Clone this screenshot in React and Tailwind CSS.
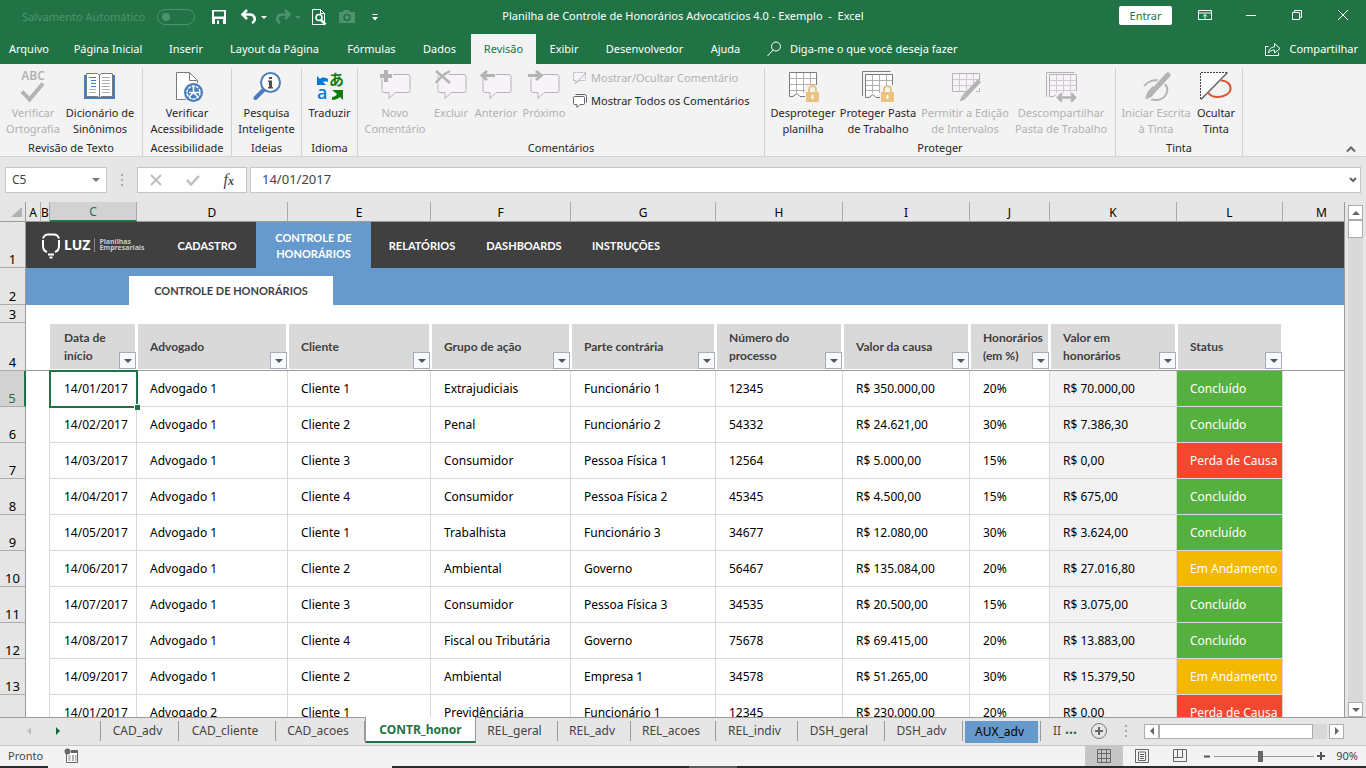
import clsx from "clsx";

const GRAY = "#b3b3b3";

/* ---------- icons ---------- */

function Icon({ children, size = 32, className, ...rest }) {
  return (
    <svg
      width={size}
      height={size}
      viewBox={`0 0 ${size} ${size}`}
      fill="none"
      aria-hidden="true"
      className={clsx("shrink-0 overflow-visible", className)}
      {...rest}
    >
      {children}
    </svg>
  );
}

function SpellingIcon() {
  return (
    <Icon>
      <text x="16" y="10" textAnchor="middle" fontSize="12" fontWeight="600" fill={GRAY}>
        ABC
      </text>
      <path d="M5 21.5l7.5 8L26 13.5" stroke={GRAY} strokeWidth="4" />
    </Icon>
  );
}

function ThesaurusIcon() {
  return (
    <Icon>
      <path d="M0 5h31v24H0z" fill="#4a7ebb" />
      <path d="M2.5 3.5h11l2 1.5 2-1.5h11v23h-11l-2 1.5-2-1.5h-11z" fill="#fff" stroke="#7a7a7a" />
      <path d="M15.5 5v23" stroke="#7a7a7a" />
      <path d="M5 7.5h7" stroke="#d9552f" />
      <path d="M7 10.5h5M7 13.5h5M7 16.5h5" stroke="#4a7ebb" />
      <path d="M5 19.5h7M5 22.5h7M18 7.5h8M18 10.5h8M18 13.5h8M18 16.5h8M18 19.5h8M18 22.5h8" stroke="#b0b0b0" />
    </Icon>
  );
}

function AccessibilityIcon() {
  return (
    <Icon>
      <path d="M5.5 2.5h13l8 8v19h-21z" fill="#fff" stroke="#7a7a7a" />
      <path d="M18.5 2.5v8h8" stroke="#7a7a7a" />
      <circle cx="22.5" cy="22.5" r="10.5" fill="#f3f3f3" />
      <circle cx="22.5" cy="22.5" r="9.5" fill="#4a7ebb" />
      <circle cx="22.5" cy="22.5" r="6.5" stroke="#fff" strokeWidth="1.5" strokeDasharray="3 1" />
      <path d="M22.5 16v6.5H29M22.5 22.5L18 27M22.5 22.5L27 27M22.5 22.5H18" stroke="#fff" strokeWidth="1.5" />
    </Icon>
  );
}

function LookupIcon() {
  return (
    <Icon>
      <path d="M13 19.5L4.500 28" stroke="#4a7ebb" strokeWidth="4" strokeLinecap="round" />
      <circle cx="19.5" cy="12.5" r="9.5" fill="#fff" stroke="#4a7ebb" strokeWidth="2" />
      <path d="M18 7h3v2h-3zM17 10.5h4V17h1v1.500h-5V17h1v-5h-1z" fill="#505050" />
    </Icon>
  );
}

function TranslateIcon() {
  return (
    <Icon>
      <path d="M3 6l3 3c2-2 5-2 8 0v3c-2-1-3-1-5 0l3 3H3z" fill="#0078d7" />
      <text x="15" y="15" fontSize="15" fontWeight="700" fill="#107c10" className="font-['Noto_Sans_CJK_JP',sans-serif]">
        あ
      </text>
      <text x="3" y="29" fontSize="18" fontWeight="500" fill="#0078d7">
        a
      </text>
      <path d="M18 20h11v10l-3-3c-2 2-5 3-8 3v-3c2 0 4-1 5-3z" fill="#107c10" />
    </Icon>
  );
}

function Balloon({ children }) {
  return (
    <Icon>
      <path
        d="M5 4.5h24a2 2 0 0 1 2 2v14a2 2 0 0 1-2 2H16l-6 6v-6H5a2 2 0 0 1-2-2v-14a2 2 0 0 1 2-2z"
        fill="#f7f3f9"
        stroke={GRAY}
      />
      {children}
    </Icon>
  );
}

function NewCommentIcon() {
  return (
    <Balloon>
      <path d="M7 0v13M0 6h14" stroke="#f3f3f3" strokeWidth="6" />
      <path d="M7 0v12M1 6h12" stroke={GRAY} strokeWidth="4" />
    </Balloon>
  );
}

function DeleteCommentIcon() {
  return (
    <Balloon>
      <path d="M1 0l14 13M15 0L1 13" stroke="#f3f3f3" strokeWidth="5" />
      <path d="M1 1l14 12M15 1C9 4 5 7 1 13" stroke={GRAY} strokeWidth="2.5" />
    </Balloon>
  );
}

function PreviousCommentIcon() {
  return (
    <Balloon>
      <path d="M0 5.5h16" stroke="#f3f3f3" strokeWidth="6" />
      <path d="M2 5.5h13M7 1L2 5.5 7 10" stroke={GRAY} strokeWidth="3" />
    </Balloon>
  );
}

function NextCommentIcon() {
  return (
    <Balloon>
      <path d="M0 5.5h14" stroke="#f3f3f3" strokeWidth="6" />
      <path d="M0 5.5h12M8 1l5 4.5L8 10" stroke={GRAY} strokeWidth="3" />
    </Balloon>
  );
}

function ToggleCommentIcon() {
  return (
    <Icon size={16}>
      <path d="M1.5 10.5v-8h12v8H7l-3 3v-3z" fill="#f7f3f9" stroke={GRAY} strokeDasharray="2 1" />
      <path d="M3 13.5L14 3" stroke={GRAY} />
    </Icon>
  );
}

function AllCommentsIcon() {
  return (
    <Icon size={16}>
      <path d="M3.5 1.500h9a2 2 0 0 1 2 2v6" stroke="#666" />
      <path d="M2.500 3.500h9a1 1 0 0 1 1 1v6a1 1 0 0 1-1 1H8l-3 3v-3H2.500a1 1 0 0 1-1-1v-6a1 1 0 0 1 1-1z" fill="#fff" stroke="#666" />
    </Icon>
  );
}

function Lock() {
  return (
    <g>
      <path d="M18 15h14v17H18z" fill="#f3f3f3" />
      <path d="M22 23v-3.5a3.500 3.500 0 0 1 7 0V23" stroke="#eac282" strokeWidth="2" />
      <path d="M19 22h13v10H19z" fill="#eac282" />
      <path d="M24.5 25h2v4h-2z" fill="#fff" />
    </g>
  );
}

function ProtectSheetIcon() {
  return (
    <Icon>
      <path d="M2.5 2.500h27v22l-3 2H11l-3-2-2 2-3.500-1z" fill="#fff" />
      <path d="M9.500 3v20M16.500 3v20M23.500 3v20M3 8.500h26M3 14.500h26M3 20.500h26" stroke="#b0b0b0" />
      <path d="M18 26.500h-5l-3-3-4 3H2.500v-24h27v14" stroke="#7a7a7a" />
      <Lock />
    </Icon>
  );
}

function ProtectWorkbookIcon() {
  return (
    <Icon>
      <path d="M.500 26V1.500h28" stroke="#7a7a7a" />
      <path d="M3.500 4.500h27v21h-27z" fill="#fff" />
      <path d="M10.500 5v18M17.500 5v18M24.500 5v18M4 10.500h26M4 15.500h26M4 20.500h26" stroke="#b0b0b0" />
      <path d="M18 27.500h-4l-3-3-4 3H3.500v-23h27v13" stroke="#7a7a7a" />
      <Lock />
    </Icon>
  );
}

function AllowEditIcon() {
  return (
    <Icon>
      <path d="M3.500 3.500h27v18h-27z" fill="#f7f3f9" stroke={GRAY} />
      <path d="M10.500 4v17M17.500 4v17M24.500 4v17M4 9.500h26M4 15.500h26" stroke="#cfc9d1" />
      <path d="M32 12L12 31" stroke="#f3f3f3" strokeWidth="7" />
      <path d="M30.500 10.500L15 27" stroke={GRAY} strokeWidth="4.500" />
      <path d="M13 25.500l4 3.500-6.500 2.500z" fill={GRAY} />
    </Icon>
  );
}

function UnshareIcon() {
  return (
    <Icon>
      <path d="M1.500 27V2.500h28" stroke={GRAY} />
      <path d="M4.500 4.500h27v21h-27z" fill="#f7f3f9" />
      <path d="M11.500 5v20M18.500 5v20M25.500 5v20M5 10.500h26M5 15.500h26M5 20.500h26" stroke="#cfc9d1" />
      <path d="M31.500 21V4.500h-27v22h4l3-2 2 2" stroke={GRAY} />
      <path d="M11 23h21v9H11z" fill="#f3f3f3" />
      <path d="M13 27.500h17M17 23.500l-4 4 4 4M26 23.500l4 4-4 4" stroke={GRAY} strokeWidth="2.500" />
    </Icon>
  );
}

function StartInkIcon() {
  return (
    <Icon>
      <path d="M4 16c4-5 11-7 16-5 8 3 9 10 5 15-4 5-12 5-18 2" stroke={GRAY} strokeWidth="2" />
      <path d="M28 5L7 28" stroke="#f3f3f3" strokeWidth="8" />
      <path d="M28 5L16 18" stroke={GRAY} strokeWidth="5" strokeLinecap="round" />
      <path d="M15 18l-6 7" stroke={GRAY} strokeWidth="6" />
      <path d="M5 29l2-6 5 4z" fill={GRAY} />
    </Icon>
  );
}

function HideInkIcon() {
  return (
    <Icon>
      <path d="M21 10.500c6 0 10 4 9.500 8.500-.5 5-7 8-13 8-4 0-7-1-9-4" stroke="#d9552f" strokeWidth="2" />
      <path d="M.500 2.500h27L.500 29.500z" fill="#fff" />
      <path d="M.500 29V2.500H28" stroke="#444" strokeDasharray="2 1" />
      <path d="M27.500 2.500L1 29.500" stroke="#666" strokeWidth="1.500" />
    </Icon>
  );
}

function Caret() {
  return (
    <Icon size={6}>
      <path d="M0 2h6L3 5z" fill="currentColor" />
    </Icon>
  );
}

/* ---------- title bar ---------- */

function TitleBar() {
  return (
    <header className="flex h-[34px] text-white">
      <div className="flex flex-1 items-center">
        <label className="ml-[22px] flex items-center gap-3 text-[#4f936c]">
          <span>Salvamento Automático</span>
          <input type="checkbox" disabled className="sr-only" />
          <span className="flex h-4 w-[38px] items-center rounded-full border border-[#4f936c] pl-1">
            <span className="size-2 rounded-full bg-[#4f936c]" />
          </span>
        </label>
        <div className="flex items-center pl-4">
          <button aria-label="Salvar" className="w-6">
            <Icon size={16}>
              <path d="M1 1h14v14H1z" fill="#fff" />
              <path d="M3 2.500h10v5H3zM4 10h8v5H4z" fill="#217346" />
              <path d="M6 11.500h2V15H6z" fill="#fff" />
            </Icon>
          </button>
          <button aria-label="Desfazer" className="flex w-10 items-center gap-1 pl-1.5">
            <Icon size={16}>
              <path d="M6 1L1.500 5.500 6 10M2 5.500h7a5 4.500 0 0 1 2 8.500" stroke="#fff" strokeWidth="2.500" />
            </Icon>
            <Caret />
          </button>
          <button aria-label="Refazer" disabled className="flex w-9 items-center gap-1 text-[#4f936c]">
            <Icon size={16}>
              <path d="M10 1l4.500 4.500L10 10M14 5.500H7a5 4.500 0 0 0-2 8.500" stroke="currentColor" strokeWidth="2.500" />
            </Icon>
            <Caret />
          </button>
          <button aria-label="Visualizar impressão" className="w-7">
            <Icon size={16}>
              <path d="M1.500.500h8l4 4v11h-12z" stroke="#fff" />
              <path d="M9.500.500v4h4" stroke="#fff" />
              <circle cx="8" cy="8.500" r="3" fill="#217346" stroke="#fff" strokeWidth="1.500" />
              <path d="M10 11l4.500 4.500" stroke="#fff" strokeWidth="2.500" />
            </Icon>
          </button>
          <button aria-label="Câmera" disabled className="w-7">
            <Icon size={16}>
              <path d="M0 3h4l1-2h5l1 2h5v11H0z" fill="#4f936c" />
              <circle cx="8" cy="8.500" r="3" stroke="#217346" strokeWidth="1.500" />
            </Icon>
          </button>
          <button aria-label="Personalizar barra" className="w-4">
            <Icon size={16}>
              <path d="M5.500 5.500h5" stroke="#fff" />
              <path d="M5 8h6l-3 3.500z" fill="#fff" />
            </Icon>
          </button>
        </div>
      </div>
      <h1 className="pt-2 leading-4 whitespace-pre">
        Planilha de Controle de Honorários Advocatícios 4.0 - Exemplo&nbsp; -&nbsp; Excel
      </h1>
      <div className="flex flex-1 items-start justify-end">
        <button className="mt-1.5 mr-2.5 h-[19px] w-[53px] rounded-xs bg-white text-[#217346]">Entrar</button>
        <button aria-label="Opções da faixa" className="flex h-[30px] w-[46px] items-center justify-center">
          <Icon size={14}>
            <path d="M.500 2.500h13v9H.500zM.500 5h13M7 11V6.500M5 8.500l2-2 2 2" stroke="#fff" />
          </Icon>
        </button>
        <button aria-label="Minimizar" className="flex h-[30px] w-[46px] items-center justify-center">
          <Icon size={10}>
            <path d="M0 5.500h10" stroke="#fff" />
          </Icon>
        </button>
        <button aria-label="Restaurar" className="flex h-[30px] w-[46px] items-center justify-center">
          <Icon size={10}>
            <path d="M.500 2.500h7v7h-7zM2.500 2.500v-2h7v7h-2" stroke="#fff" />
          </Icon>
        </button>
        <button aria-label="Fechar" className="flex h-[30px] w-[46px] items-center justify-center">
          <Icon size={10}>
            <path d="M0 0l10 10M10 0L0 10" stroke="#fff" />
          </Icon>
        </button>
      </div>
    </header>
  );
}

const menu = [
  { label: "Arquivo", width: "w-[58px]" },
  { label: "Página Inicial", width: "w-[100px]" },
  { label: "Inserir", width: "w-[56px]" },
  { label: "Layout da Página", width: "w-[121px]" },
  { label: "Fórmulas", width: "w-[73px]" },
  { label: "Dados", width: "w-[63px]" },
  { label: "Revisão", width: "w-[65px]", active: true },
  { label: "Exibir", width: "w-[56px]" },
  { label: "Desenvolvedor", width: "w-[105px]" },
  { label: "Ajuda", width: "w-[57px]" },
];

function MenuTabs() {
  return (
    <nav className="flex h-[30px] text-white">
      {menu.map((item) => (
        <button
          key={item.label}
          className={clsx("shrink-0 whitespace-nowrap", item.width, item.active && "bg-[#f3f3f3] text-[#217346]")}
        >
          {item.label}
        </button>
      ))}
      <button className="flex items-center gap-2 pl-3 whitespace-nowrap">
        <Icon size={16}>
          <circle cx="10" cy="5.500" r="4.500" stroke="#fff" />
          <path d="M7 9l-5.500 6" stroke="#fff" />
        </Icon>
        Diga-me o que você deseja fazer
      </button>
      <button className="ml-auto flex items-center gap-2 pr-2">
        <Icon size={16}>
          <path d="M3.500 5.500h-3v9h13v-3" stroke="#fff" />
          <path d="M3.500 12c0-4 3-6 6-6V2.500l5.500 5-5.500 4.500V9c-3 0-4.500 1-6 3z" stroke="#fff" />
        </Icon>
        Compartilhar
      </button>
    </nav>
  );
}

/* ---------- ribbon ---------- */

function RibbonButton({ icon, lines, width, disabled }) {
  return (
    <button
      disabled={disabled}
      className={clsx("flex shrink-0 flex-col items-center gap-[3px] whitespace-nowrap", width, disabled && "text-[#b1b1b1]")}
    >
      {icon}
      <span className="leading-4">
        {lines[0]}
        {lines[1] && <br />}
        {lines[1]}
      </span>
    </button>
  );
}

function RibbonGroup({ label, width, children }) {
  return (
    <section className={clsx("flex shrink-0 flex-col justify-between border-r border-[#d2d2d2]", width)}>
      <div className="flex items-start pt-0.5">{children}</div>
      <h2 className="text-center leading-4">{label}</h2>
    </section>
  );
}

function Ribbon() {
  return (
    <div className="flex shrink-0 border-b border-[#d2d2d2] bg-[#f3f3f3] pt-1 text-[#262626]">
      <div className="flex h-[88px] flex-1">
        <RibbonGroup label="Revisão de Texto" width="w-[143px]">
          <RibbonButton icon={<SpellingIcon />} lines={["Verificar", "Ortografia"]} width="w-[66px]" disabled />
          <RibbonButton icon={<ThesaurusIcon />} lines={["Dicionário de", "Sinônimos"]} width="w-[68px]" />
        </RibbonGroup>
        <RibbonGroup label="Acessibilidade" width="w-[89px]">
          <RibbonButton icon={<AccessibilityIcon />} lines={["Verificar", "Acessibilidade"]} width="w-[88px]" />
        </RibbonGroup>
        <RibbonGroup label="Ideias" width="w-[70px]">
          <RibbonButton icon={<LookupIcon />} lines={["Pesquisa", "Inteligente"]} width="w-[69px]" />
        </RibbonGroup>
        <RibbonGroup label="Idioma" width="w-[56px]">
          <RibbonButton icon={<TranslateIcon />} lines={["Traduzir"]} width="w-[55px]" />
        </RibbonGroup>
        <RibbonGroup label="Comentários" width="w-[407px]">
          <RibbonButton icon={<NewCommentIcon />} lines={["Novo", "Comentário"]} width="w-[74px]" disabled />
          <RibbonButton icon={<DeleteCommentIcon />} lines={["Excluir"]} width="w-[38px]" disabled />
          <RibbonButton icon={<PreviousCommentIcon />} lines={["Anterior"]} width="w-[52px]" disabled />
          <RibbonButton icon={<NextCommentIcon />} lines={["Próximo"]} width="w-[44px]" disabled />
          <div className="flex flex-col gap-[7px] pl-1.5 whitespace-nowrap">
            <button disabled className="flex h-4 items-center gap-[3px] text-[#b1b1b1]">
              <ToggleCommentIcon />
              Mostrar/Ocultar Comentário
            </button>
            <button className="flex h-4 items-center gap-[3px]">
              <AllCommentsIcon />
              Mostrar Todos os Comentários
            </button>
          </div>
        </RibbonGroup>
        <RibbonGroup label="Proteger" width="w-[351px]">
          <RibbonButton icon={<ProtectSheetIcon />} lines={["Desproteger", "planilha"]} width="w-[76px]" />
          <RibbonButton icon={<ProtectWorkbookIcon />} lines={["Proteger Pasta", "de Trabalho"]} width="w-[74px]" />
          <RibbonButton icon={<AllowEditIcon />} lines={["Permitir a Edição", "de Intervalos"]} width="w-[100px]" disabled />
          <RibbonButton icon={<UnshareIcon />} lines={["Descompartilhar", "Pasta de Trabalho"]} width="w-[92px]" disabled />
        </RibbonGroup>
        <RibbonGroup label="Tinta" width="w-[127px]">
          <RibbonButton icon={<StartInkIcon />} lines={["Iniciar Escrita", "à Tinta"]} width="w-[80px]" disabled />
          <RibbonButton icon={<HideInkIcon />} lines={["Ocultar", "Tinta"]} width="w-[40px]" />
        </RibbonGroup>
        <button aria-label="Recolher faixa de opções" className="mt-auto mr-2.5 mb-0.5 ml-auto">
          <Icon size={10}>
            <path d="M1 7.500l4-4 4 4" stroke="#666" strokeWidth="2" />
          </Icon>
        </button>
      </div>
    </div>
  );
}

function Grip() {
  return (
    <div className="flex flex-col gap-[3px]">
      <i className="size-0.5 bg-[#aaa]" />
      <i className="size-0.5 bg-[#aaa]" />
      <i className="size-0.5 bg-[#aaa]" />
    </div>
  );
}

function FormulaBar() {
  return (
    <div className="flex shrink-0 items-center gap-[3px] px-[5px] pt-2.5 pb-[9px] text-xs text-[#444]">
      <div className="flex h-[26px] w-[102px] items-center border border-[#c6c6c6] bg-white pr-1.5">
        <input aria-label="Caixa de nome" defaultValue="C5" className="min-w-0 flex-1 pl-1.5 outline-none" />
        <button aria-label="Nomes definidos">
          <Icon size={8}>
            <path d="M0 2h8L4 6z" fill="#777" />
          </Icon>
        </button>
      </div>
      <div className="flex w-6 justify-center">
        <Grip />
      </div>
      <div className="flex h-[26px] w-[110px] items-center justify-around border border-[#c6c6c6] bg-white">
        <button aria-label="Cancelar" disabled>
          <Icon size={12}>
            <path d="M1 1l10 10M11 1L1 11" stroke="#bdbdbd" strokeWidth="2" />
          </Icon>
        </button>
        <button aria-label="Inserir" disabled>
          <Icon size={14}>
            <path d="M1 7l4 4.500L13 3" stroke="#bdbdbd" strokeWidth="2.500" />
          </Icon>
        </button>
        <button aria-label="Inserir função" className="font-['Liberation_Serif',serif] text-base leading-4 text-[#444] italic">
          f<span className="text-xs font-bold">x</span>
        </button>
      </div>
      <div className="flex h-[26px] flex-1 items-center border border-[#c6c6c6] bg-white pr-[3px]">
        <input aria-label="Barra de fórmulas" defaultValue="14/01/2017" className="min-w-0 flex-1 pl-[11px] text-[13px] outline-none" />
        <button aria-label="Expandir barra de fórmulas">
          <Icon size={8}>
            <path d="M1 2l3 3 3-3" stroke="#666" strokeWidth="2" />
          </Icon>
        </button>
      </div>
    </div>
  );
}

/* ---------- worksheet ---------- */

const columns = [
  { letter: "A", width: "w-[15px]" },
  { letter: "B", width: "w-[9px]" },
  { letter: "C", width: "w-[87px]", title: ["Data de", "início"] },
  { letter: "D", width: "w-[151px]", title: ["Advogado"] },
  { letter: "E", width: "w-[143px]", title: ["Cliente"] },
  { letter: "F", width: "w-[140px]", title: ["Grupo de ação"] },
  { letter: "G", width: "w-[145px]", title: ["Parte contrária"] },
  { letter: "H", width: "w-[127px]", title: ["Número do", "processo"] },
  { letter: "I", width: "w-[127px]", title: ["Valor da causa"] },
  { letter: "J", width: "w-[80px]", title: ["Honorários", "(em %)"] },
  { letter: "K", width: "w-[127px]", title: ["Valor em", "honorários"] },
  { letter: "L", width: "w-[106px]", title: ["Status"] },
  { letter: "M" },
];

const dataColumns = columns.filter((c) => c.title);

const rows = [
  ["14/01/2017", "Advogado 1", "Cliente 1", "Extrajudiciais", "Funcionário 1", "12345", "R$ 350.000,00", "20%", "R$ 70.000,00", "Concluído"],
  ["14/02/2017", "Advogado 1", "Cliente 2", "Penal", "Funcionário 2", "54332", "R$ 24.621,00", "30%", "R$ 7.386,30", "Concluído"],
  ["14/03/2017", "Advogado 1", "Cliente 3", "Consumidor", "Pessoa Física 1", "12564", "R$ 5.000,00", "15%", "R$ 0,00", "Perda de Causa"],
  ["14/04/2017", "Advogado 1", "Cliente 4", "Consumidor", "Pessoa Física 2", "45345", "R$ 4.500,00", "15%", "R$ 675,00", "Concluído"],
  ["14/05/2017", "Advogado 1", "Cliente 1", "Trabalhista", "Funcionário 3", "34677", "R$ 12.080,00", "30%", "R$ 3.624,00", "Concluído"],
  ["14/06/2017", "Advogado 1", "Cliente 2", "Ambiental", "Governo", "56467", "R$ 135.084,00", "20%", "R$ 27.016,80", "Em Andamento"],
  ["14/07/2017", "Advogado 1", "Cliente 3", "Consumidor", "Pessoa Física 3", "34535", "R$ 20.500,00", "15%", "R$ 3.075,00", "Concluído"],
  ["14/08/2017", "Advogado 1", "Cliente 4", "Fiscal ou Tributária", "Governo", "75678", "R$ 69.415,00", "20%", "R$ 13.883,00", "Concluído"],
  ["14/09/2017", "Advogado 1", "Cliente 2", "Ambiental", "Empresa 1", "34578", "R$ 51.265,00", "30%", "R$ 15.379,50", "Em Andamento"],
  ["14/01/2017", "Advogado 2", "Cliente 1", "Previdênciária", "Funcionário 1", "12345", "R$ 230.000,00", "20%", "R$ 0,00", "Perda de Causa"],
];

const statusColor = {
  "Concluído": "bg-[#56b03f] text-white",
  "Em Andamento": "bg-[#f3b800] text-white",
  "Perda de Causa": "bg-[#f3482f] text-white",
};

function RowHeading({ children, active }) {
  return (
    <th
      scope="row"
      className={clsx(
        "border-b p-0 text-center align-bottom text-[13px] leading-4 font-normal",
        active
          ? "border-r-2 border-r-[#217346] border-b-[#ababab] bg-[#d2d2d2] text-[#217346]"
          : "border-r border-r-[#9b9b9b] border-b-[#ababab] text-black"
      )}
    >
      {children}
    </th>
  );
}

function LuzLogo() {
  return (
    <div className="flex w-[103px] items-center pl-3 text-white">
      <Icon size={26} className="mt-0.5">
        <path d="M5 5.500C6 2.500 8 1.500 10 1.500h6c2 0 4 1 5 4" stroke="#fff" strokeWidth="2" />
        <path d="M9 19C6 18 5 16 5 13V7M17 19c3-1 4-3 4-6V7" stroke="#fff" strokeWidth="2" />
        <path d="M10 21.500h6M11.500 24.500h3" stroke="#fff" strokeWidth="2" />
      </Icon>
      <span className="font-['Noto_Sans',sans-serif] text-sm leading-4">LUZ</span>
      <span className="ml-1 border-l border-[#888] py-px pl-1 text-[7px] leading-[6px] text-[#c8c8c8]">
        Planilhas
        <br />
        Empresariais
      </span>
    </div>
  );
}

const sections = [
  { label: "CADASTRO", width: "w-[98px]" },
  { label: "CONTROLE DE HONORÁRIOS", width: "w-[115px]", active: true },
  { label: "RELATÓRIOS", width: "w-[102px]" },
  { label: "DASHBOARDS", width: "w-[102px]" },
  { label: "INSTRUÇÕES", width: "w-[102px]" },
];

function SectionNav() {
  return (
    <nav className="flex h-[46px] bg-[#404040] leading-4 font-bold text-white">
      <LuzLogo />
      <span className="w-[29px]" />
      {sections.map((s) => (
        <a
          key={s.label}
          href="#"
          className={clsx(
            "flex items-center justify-center px-2 pt-0.5 text-center font-['Lato',sans-serif] text-[11px]",
            s.width,
            s.active && "bg-[#6699cc]"
          )}
        >
          {s.label}
        </a>
      ))}
    </nav>
  );
}

function HeaderCell({ title, first }) {
  return (
    <th scope="col" className="border-b border-[#9b9b9b] bg-white p-0 text-left">
      <div
        className={clsx(
          "relative mr-0.5 flex h-[45px] items-center bg-[#d9d9d9] font-['Lato',sans-serif] text-xs leading-[18px] font-bold whitespace-nowrap text-[#404040]",
          first ? "pl-3.5" : "ml-px pl-3"
        )}
      >
        <span>
          {title[0]}
          {title[1] && <br />}
          {title[1]}
        </span>
        <button
          aria-label={`Filtrar ${title.join(" ")}`}
          className="absolute -right-px bottom-0 flex size-[17px] items-center justify-center border border-[#a5adb8] bg-[#f8f9fc]"
        >
          <Icon size={8}>
            <path d="M0 2h8L4 6z" fill="#555" />
          </Icon>
        </button>
      </div>
    </th>
  );
}

function Worksheet() {
  return (
    <div className="min-w-0 flex-1 overflow-hidden border-r border-[#9b9b9b]">
      <table className="w-full table-fixed border-separate border-spacing-0 text-xs leading-4 text-black">
        <colgroup>
          <col className="w-[26px]" />
          {columns.map((c) => (
            <col key={c.letter} className={c.width} />
          ))}
        </colgroup>
        <thead>
          <tr className="h-5 bg-[#e6e6e6]">
            <td className="border-r border-b border-[#9b9b9b] p-0">
              <Icon size={12} className="ml-2.5">
                <path d="M12 1v10H1z" fill="#b2b2b2" />
              </Icon>
            </td>
            {columns.map((c) => (
              <th
                key={c.letter}
                scope="col"
                className={clsx(
                  "border-r p-0 pt-0.5 font-normal",
                  c.letter === "C"
                    ? "border-b-2 border-r-[#ababab] border-b-[#217346] bg-[#d2d2d2] text-[#217346]"
                    : "border-b border-r-[#ababab] border-b-[#9b9b9b]",
                  c.letter === "M" && "border-r-0 pl-4"
                )}
              >
                {c.letter}
              </th>
            ))}
          </tr>
        </thead>
        <tbody>
          <tr className="bg-[#e6e6e6]">
            <RowHeading>1</RowHeading>
            <td colSpan={13} className="p-0">
              <SectionNav />
            </td>
          </tr>
          <tr className="h-[37px] bg-[#e6e6e6]">
            <RowHeading>2</RowHeading>
            <td colSpan={13} className="bg-[#6699cc] p-0 pl-[103px] align-bottom">
              <a
                href="#"
                className="flex h-[29px] w-[204px] items-center justify-center bg-white font-['Lato',sans-serif] text-[11px] font-bold text-[#404040]"
              >
                CONTROLE DE HONORÁRIOS
              </a>
            </td>
          </tr>
          <tr className="h-[18px] bg-[#e6e6e6]">
            <RowHeading>3</RowHeading>
            <td colSpan={13} className="bg-white p-0" />
          </tr>
          <tr className="h-12 bg-[#e6e6e6]">
            <RowHeading>4</RowHeading>
            <td colSpan={2} className="border-b border-[#9b9b9b] bg-white p-0" />
            {dataColumns.map((c, i) => (
              <HeaderCell key={c.letter} title={c.title} first={i === 0} />
            ))}
            <td className="border-b border-[#9b9b9b] bg-white p-0" />
          </tr>
          {rows.map((row, r) => (
            <tr key={r} className="h-9 bg-[#e6e6e6]">
              <RowHeading active={r === 0}>{r < 9 ? r + 5 : ""}</RowHeading>
              <td colSpan={2} className="border-r border-[#d9d9d9] bg-white p-0" />
              {row.map((value, c) => (
                <td
                  key={c}
                  className={clsx(
                    "border-r border-b border-[#d9d9d9] py-0 pr-0 whitespace-nowrap",
                    c === 0 ? "pl-3.5" : "pl-[13px]",
                    c < 8 && "bg-white",
                    c === 8 && "bg-[#f2f2f2]",
                    c === 9 && statusColor[value],
                    r === 0 && c === 0 && "relative"
                  )}
                >
                  {value}
                  {r === 0 && c === 0 && (
                    <span className="absolute -top-px -right-0.5 -bottom-0.5 -left-px border-2 border-[#217346]">
                      <span className="absolute -right-1 -bottom-1 size-1.5 border-t border-l border-white bg-[#217346]" />
                    </span>
                  )}
                </td>
              ))}
              <td className="bg-white p-0" />
            </tr>
          ))}
        </tbody>
      </table>
    </div>
  );
}

function ArrowButton({ label, d }) {
  return (
    <button aria-label={label} className="flex size-[15px] shrink-0 items-center justify-center border border-[#ababab] bg-white">
      <Icon size={8}>
        <path d={d} fill="#666" />
      </Icon>
    </button>
  );
}

function VerticalScroll() {
  return (
    <div className="flex w-[21px] flex-col items-center pt-[3px]">
      <ArrowButton label="Rolar para cima" d="M0 6h8L4 2z" />
      <div className="flex-1 bg-[#d9d9d9]">
        <div className="h-[18px] w-[15px] border border-[#ababab] bg-white" />
      </div>
      <ArrowButton label="Rolar para baixo" d="M0 2h8L4 6z" />
    </div>
  );
}

/* ---------- sheet tabs and status bar ---------- */

const sheets = [
  { name: "CAD_adv", width: "w-[78px]" },
  { name: "CAD_cliente", width: "w-[97px]" },
  { name: "CAD_acoes", width: "w-[89px]" },
  { name: "CONTR_honor", width: "w-[111px]", active: true },
  { name: "REL_geral", width: "w-[82px]" },
  { name: "REL_adv", width: "w-[73px]" },
  { name: "REL_acoes", width: "w-[85px]" },
  { name: "REL_indiv", width: "w-[82px]" },
  { name: "DSH_geral", width: "w-[87px]" },
  { name: "DSH_adv", width: "w-[78px]" },
  { name: "AUX_adv", width: "w-[78px]", blue: true },
];

function SheetTab({ name, width, active, blue }) {
  if (active) {
    return (
      <button
        className={clsx(
          "-mt-px h-[26px] shrink-0 border-x border-b-2 border-x-[#9b9b9b] border-b-[#217346] bg-white pt-0.5 font-bold text-[#217346]",
          width
        )}
      >
        {name}
      </button>
    );
  }
  return (
    <button className={clsx("mt-[3px] h-5 shrink-0 border-r border-[#9b9b9b]", width, blue ? "px-0.5 text-black" : "pr-1")}>
      <span className={clsx(blue && "flex h-[22px] items-center justify-center bg-[#6699cc] pr-1")}>{name}</span>
    </button>
  );
}

function SheetTabs() {
  return (
    <div className="flex h-7 shrink-0 items-start border-t border-[#9b9b9b] text-xs text-[#444]">
      <div className="flex h-[26px] w-[100px] shrink-0 items-center pl-[26px]">
        <button aria-label="Planilha anterior" className="w-7">
          <Icon size={8}>
            <path d="M5 0v8L1 4z" fill="#c0c0c0" />
          </Icon>
        </button>
        <button aria-label="Próxima planilha">
          <Icon size={8}>
            <path d="M2 0v8l4-4z" fill="#0e6b38" />
          </Icon>
        </button>
      </div>
      <div className="flex shrink-0">
        <i className="mt-[3px] h-5 w-px bg-[#9b9b9b]" />
        {sheets.map((s) => (
          <SheetTab key={s.name} {...s} />
        ))}
      </div>
      <div className="flex h-[26px] flex-1 items-center pl-3">
        <span className="w-3 text-[#7a3b2e]">II</span>
        <button aria-label="Mais planilhas" className="w-[26px] pb-1 text-left text-sm leading-4 font-bold text-[#217346]">
          …
        </button>
        <button aria-label="Nova planilha">
          <Icon size={16}>
            <circle cx="8" cy="8" r="7.500" stroke="#777" />
            <path d="M8 4v8M4 8h8" stroke="#666" strokeWidth="2" />
          </Icon>
        </button>
        <div className="flex flex-1 justify-center">
          <Grip />
        </div>
        <div className="mr-[22px] flex w-[200px] items-center">
          <ArrowButton label="Rolar para a esquerda" d="M6 0v8L2 4z" />
          <div className="mr-0.5 flex-1 bg-[#d9d9d9]">
            <div className="h-[15px] w-[154px] border border-[#ababab] bg-white" />
          </div>
          <ArrowButton label="Rolar para a direita" d="M2 0v8l4-4z" />
        </div>
      </div>
    </div>
  );
}

function StatusBar() {
  return (
    <footer className="flex h-[21px] shrink-0 items-center border-t border-[#c6c6c6] bg-[#f3f3f3] px-2 text-[#444]">
      <span className="w-14">Pronto</span>
      <button aria-label="Gravar macro">
        <Icon size={16}>
          <path d="M2.500 6v8.500h11v-10H7" fill="#fff" stroke="#666" />
          <path d="M7 2h7v3H7z" fill="#666" />
          <circle cx="3.500" cy="3.500" r="3" fill="#666" />
          <path d="M4.500 8h2M8 8h2M11 8h1.500M4.500 10h2M8 10h2M11 10h1.500M4.500 12h2M8 12h2M11 12h1.500" stroke="#666" />
        </Icon>
      </button>
      <div className="ml-auto flex h-full items-center">
        <button aria-label="Normal" className="flex h-full w-[38px] items-center justify-center bg-[#c6c6c6]">
          <Icon size={14}>
            <path d="M.500.500h13v13H.500zM4.500 1v12M9.500 1v12M1 4.500h12M1 9.500h12" stroke="#666" />
          </Icon>
        </button>
        <button aria-label="Layout da página" className="flex w-[38px] justify-center">
          <Icon size={14}>
            <path d="M.500.500h13v13H.500zM3.500 3h7v8.500h-7zM5 5.500h4M5 7.500h4M5 9.500h4" stroke="#666" />
          </Icon>
        </button>
        <button aria-label="Quebra de página" className="flex w-[38px] justify-center">
          <Icon size={14}>
            <path d="M.500.500h13v12H.500zM4.500 1v7M9.500 1v7M1 8.500h9" stroke="#666" />
          </Icon>
        </button>
        <button aria-label="Diminuir zoom" className="w-[15px]">
          <Icon size={8} className="ml-1">
            <path d="M1 4.500h6" stroke="#555" strokeWidth="2" />
          </Icon>
        </button>
        <input
          type="range"
          aria-label="Zoom"
          defaultValue={46}
          className="h-3 w-[100px] appearance-none bg-[linear-gradient(#999,#999)] bg-[length:100%_1px] bg-center bg-no-repeat [&::-webkit-slider-thumb]:h-[11px] [&::-webkit-slider-thumb]:w-[5px] [&::-webkit-slider-thumb]:appearance-none [&::-webkit-slider-thumb]:bg-[#666]"
        />
        <button aria-label="Aumentar zoom" className="w-[22px]">
          <Icon size={8} className="ml-[3px]">
            <path d="M0 4h8M4 0v8" stroke="#555" strokeWidth="2" />
          </Icon>
        </button>
        <span>90%</span>
      </div>
    </footer>
  );
}

export default function App() {
  return (
    <div className="flex h-screen flex-col overflow-hidden bg-[#e6e6e6] font-['Noto_Sans','Open_Sans',sans-serif] text-[11px] leading-4">
      <div className="shrink-0 bg-[#217346]">
        <TitleBar />
        <MenuTabs />
      </div>
      <Ribbon />
      <FormulaBar />
      <main className="flex min-h-0 flex-1">
        <Worksheet />
        <VerticalScroll />
      </main>
      <SheetTabs />
      <StatusBar />
      <div className="flex h-0.5 shrink-0 bg-[#2b2b2b]">
        <i className="ml-12 w-[344px] bg-[#f3f3f3]" />
        <i className="ml-[297px] w-12 bg-[#5c5c5c]" />
      </div>
    </div>
  );
}
